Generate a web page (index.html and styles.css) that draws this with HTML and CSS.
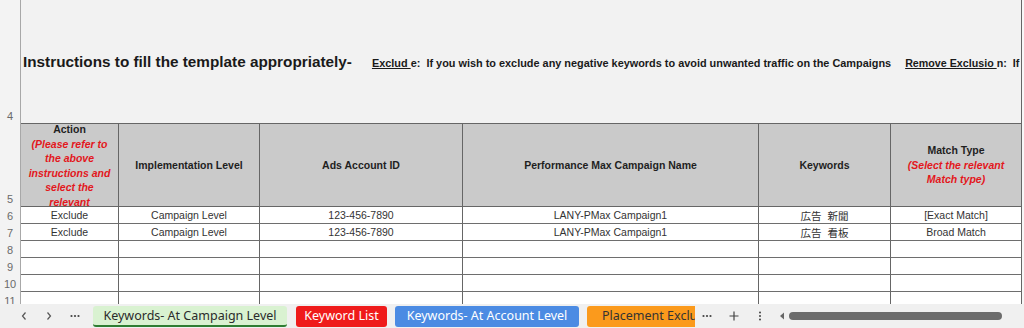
FILE: index.html
```html
<!DOCTYPE html>
<html lang="en">
<head>
    <meta charset="UTF-8">
    <meta name="viewport" content="width=device-width, initial-scale=1.0">
    <title>Keywords- At Campaign Level</title>
    <link rel="stylesheet" href="styles.css">
</head>
<body>
    <div class="sheet">
        <!-- row 4: merged instructions cell -->
        <div class="rh">4</div>
        <div class="notes">
            <div class="notes-line">
                <span class="title">Instructions to fill the template appropriately-</span>
                <span class="note"><u>Exclud </u>e:&nbsp; If you wish to exclude any negative keywords to avoid unwanted traffic on the Campaigns</span>
                <span class="note"><u>Remove Exclusio </u>n:&nbsp; If you wish to remove an existing negative keyword</span>
            </div>
        </div>
        <div class="rest"></div>

        <!-- row 5: headers -->
        <div class="rh">5</div>
        <div class="hd hd-top">Action<em>(Please refer to the above instructions and select the relevant<br>action)</em></div>
        <div class="hd">Implementation Level</div>
        <div class="hd">Ads Account ID</div>
        <div class="hd">Performance Max Campaign Name</div>
        <div class="hd">Keywords</div>
        <div class="hd">Match Type<em>(Select the relevant Match type)</em></div>
        <div class="rest"></div>

        <div class="rh">6</div>
        <div class="c">Exclude</div>
        <div class="c">Campaign Level</div>
        <div class="c">123-456-7890</div>
        <div class="c">LANY-PMax Campaign1</div>
        <div class="c">広告&nbsp; 新聞</div>
        <div class="c">[Exact Match]</div>
        <div class="rest"></div>

        <div class="rh">7</div>
        <div class="c">Exclude</div>
        <div class="c">Campaign Level</div>
        <div class="c">123-456-7890</div>
        <div class="c">LANY-PMax Campaign1</div>
        <div class="c">広告&nbsp; 看板</div>
        <div class="c">Broad Match</div>
        <div class="rest"></div>

        <div class="rh">8</div>
        <div class="c"></div><div class="c"></div><div class="c"></div><div class="c"></div><div class="c"></div><div class="c"></div>
        <div class="rest"></div>

        <div class="rh">9</div>
        <div class="c"></div><div class="c"></div><div class="c"></div><div class="c"></div><div class="c"></div><div class="c"></div>
        <div class="rest"></div>

        <div class="rh">10</div>
        <div class="c"></div><div class="c"></div><div class="c"></div><div class="c"></div><div class="c"></div><div class="c"></div>
        <div class="rest"></div>

        <div class="rh">11</div>
        <div class="c"></div><div class="c"></div><div class="c"></div><div class="c"></div><div class="c"></div><div class="c"></div>
        <div class="rest"></div>
    </div>

    <div class="tabbar">
        <div class="nav">
            <svg class="ico" width="10" height="12" viewBox="0 0 10 12"><polyline points="6.5,2.5 3.5,6 6.5,9.5" fill="none" stroke="#555" stroke-width="1.2"/></svg>
            <svg class="ico" width="10" height="12" viewBox="0 0 10 12"><polyline points="3.5,2.5 6.5,6 3.5,9.5" fill="none" stroke="#555" stroke-width="1.2"/></svg>
            <svg class="ico" width="12" height="12" viewBox="0 0 12 12"><circle cx="2.5" cy="6" r="1.1" fill="#444"/><circle cx="6" cy="6" r="1.1" fill="#444"/><circle cx="9.5" cy="6" r="1.1" fill="#444"/></svg>
        </div>
        <div class="tabs">
            <div class="tab tab-active">Keywords- At Campaign Level</div>
            <div class="tab tab-red">Keyword List</div>
            <div class="tab tab-blue">Keywords- At Account Level</div>
            <div class="tab tab-orange">Placement Exclusions</div>
        </div>
        <div class="tools">
            <svg class="ico" width="12" height="12" viewBox="0 0 12 12"><circle cx="2.5" cy="6" r="1.1" fill="#444"/><circle cx="6" cy="6" r="1.1" fill="#444"/><circle cx="9.5" cy="6" r="1.1" fill="#444"/></svg>
            <svg class="ico" width="12" height="12" viewBox="0 0 12 12"><path d="M6 1.5v9M1.5 6h9" stroke="#444" stroke-width="1.2"/></svg>
            <svg class="ico" width="6" height="12" viewBox="0 0 6 12"><circle cx="3" cy="2.5" r="1" fill="#444"/><circle cx="3" cy="6" r="1" fill="#444"/><circle cx="3" cy="9.5" r="1" fill="#444"/></svg>
            <div class="scroll">
                <svg width="6" height="8" viewBox="0 0 6 8"><polygon points="5,0.5 1,4 5,7.5" fill="#666"/></svg>
                <div class="thumb"></div>
            </div>
        </div>
    </div>
</body>
</html>
```

FILE: styles.css
```css
* {
    box-sizing: border-box;
    margin: 0;
    padding: 0;
}
body {
    font-family: "Liberation Sans", Arial, sans-serif;
    background: #f3f3f3;
    color: #333;
    overflow: hidden;
}
.sheet {
    display: grid;
    grid-template-columns: 21px 98px 141px 203px 296px 132px 131px 1fr;
    grid-template-rows: 124px 83px repeat(6, 17px);
    height: 304px;
    overflow: hidden;
}
.rh {
    display: flex;
    align-items: flex-end;
    justify-content: center;
    font-size: 11px;
    line-height: 14px;
    color: #6a6a6a;
    border-right: 1px solid #a8a8a8;
    background: #f3f3f3;
    padding-bottom: 1px;
}
.notes {
    grid-column: 2 / 8;
    display: flex;
    align-items: center;
    background: #f2f2f2;
    border-right: 1px solid #666;
    border-bottom: 1px solid #666;
    overflow: hidden;
    white-space: nowrap;
    padding-left: 2px;
}
.notes-line {
    display: flex;
    align-items: baseline;
    color: #1a1a1a;
    font-weight: bold;
}
.title {
    font-size: 15.3px;
}
.note {
    font-size: 10.9px;
    margin-left: 20px;
}
.note + .note {
    margin-left: 14px;
    font-size: 10.7px;
}
.rest {
    background: #f7f7f7;
}
.hd {
    display: flex;
    flex-direction: column;
    justify-content: center;
    align-items: center;
    text-align: center;
    background: #cacaca;
    font-size: 10.5px;
    font-weight: bold;
    line-height: 14.5px;
    color: #1f1f1f;
    padding: 0 3px;
    border-right: 1px solid #666;
    border-bottom: 1px solid #666;
    overflow: hidden;
}
.hd em {
    color: #e3171c;
}
.hd-top {
    justify-content: flex-start;
    padding-top: 0;
}
.hd-top::before {
    content: "";
    display: block;
    margin-top: -2px;
}
.c {
    display: flex;
    align-items: center;
    justify-content: center;
    background: #fff;
    font-size: 10.5px;
    color: #333;
    white-space: nowrap;
    border-right: 1px solid #666;
    border-bottom: 1px solid #6e6e6e;
    font-family: "Liberation Sans", "Noto Sans CJK JP", sans-serif;
}
.tabbar {
    display: flex;
    align-items: center;
    height: 24px;
    background: #f0f0f0;
    font-family: "Noto Sans", "Open Sans", sans-serif;
    font-size: 12.5px;
}
.ico {
    display: block;
}
.nav {
    display: flex;
    align-items: center;
    gap: 15px;
    width: 93px;
    padding-left: 19px;
}
.tabs {
    display: flex;
    gap: 8px;
    width: 602px;
    overflow: hidden;
    white-space: nowrap;
    margin-top: 1px;
}
.tab {
    flex: none;
    height: 21px;
    line-height: 20px;
    text-align: center;
    border-radius: 3px;
    overflow: hidden;
}
.tab-active {
    width: 194px;
    background: #d9f2d1;
    color: #2b2b2b;
    border-bottom: 2px solid #2f7d32;
    line-height: 19px;
}
.tab-red {
    width: 91px;
    margin-left: 1px;
    background: #ef1b1b;
    color: #fff;
}
.tab-blue {
    width: 184px;
    background: #4b8be3;
    color: #fff;
}
.tab-orange {
    width: 140px;
    background: #fb9a1c;
    color: #333;
    text-align: left;
    padding-left: 15px;
}
.tools {
    display: flex;
    align-items: center;
    gap: 15px;
    padding-left: 6px;
    flex: 1;
}
.tools .ico:nth-child(3) {
    margin-left: 2px;
}
.scroll {
    display: flex;
    align-items: center;
    gap: 4px;
    flex: 1;
    margin-left: 1px;
}
.thumb {
    width: 213px;
    height: 8px;
    border-radius: 4px;
    background: #6c6c6c;
}
```
